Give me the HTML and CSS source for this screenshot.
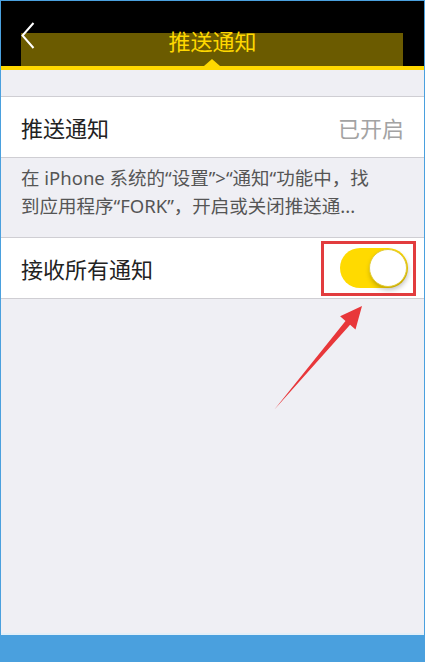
FILE: index.html
```html
<html>
    <head>
        <meta charset="utf-8">
        <link rel="stylesheet" href="styles.css">
    </head>
    <body>
        <div class="screen">
            <div class="navbar">
                <div class="title-mark"></div>
                <svg class="back" width="14" height="27" viewBox="0 0 14 27">
                    <polyline points="12.5,1 1.5,13.5 12.5,26" fill="none" stroke="#fff" stroke-width="2"/>
                </svg>
                <div class="title">推送通知</div>
                <div></div>
                <div class="notch"></div>
            </div>

            <div class="group">
                <div class="row">
                    <span class="label">推送通知</span>
                    <span class="value">已开启</span>
                </div>
            </div>

            <div class="hint">
                <div class="hint-line">在 iPhone 系统的“设置”&gt;“通知“功能中，找</div>
                <div class="hint-line">到应用程序“FORK”，开启或关闭推送通...</div>
            </div>

            <div class="group">
                <div class="row switch-row">
                    <span class="label">接收所有通知</span>
                    <div class="highlight">
                        <div class="switch on"><div class="knob"></div></div>
                    </div>
                </div>
            </div>
        </div>

        <!-- pointer arrow drawn over the page -->
        <svg class="pointer" width="425" height="662" viewBox="0 0 425 662">
            <polygon points="274,410 350.1,324.7 355.5,329.4 362,306 340.1,316.2 345.5,320.9" fill="#e8373a"/>
        </svg>
    </body>
</html>
```

FILE: styles.css
```css
body
{
    margin: 0;
    background-color: #4aa0de;
    font-family: "Noto Sans CJK SC", "Noto Sans", sans-serif;
}

.screen
{
    margin: 1px 1px 0 1px;
    height: 632px;
    background-color: #efeff4;
    border-bottom: 2px solid #e2eff8;
}

.navbar
{
    position: relative;
    height: 65px;
    padding: 0 20px;
    background-color: #000;
    border-bottom: 4px solid #ffd800;
    display: grid;
    grid-template-columns: 1fr auto 1fr;
    align-items: start;
}

.title-mark
{
    position: absolute;
    left: 20px;
    top: 32px;
    width: 382px;
    height: 33px;
    background-color: #6b5b00;
}

.back
{
    position: relative;
    margin-top: 21px;
}

.title
{
    position: relative;
    margin-top: 22px;
    line-height: 34px;
    font-size: 22px;
    color: #ffd800;
}

.notch
{
    position: absolute;
    left: 203px;
    bottom: 0;
    width: 0;
    height: 0;
    border-left: 8px solid transparent;
    border-right: 8px solid transparent;
    border-bottom: 7px solid #ffd800;
}

.group
{
    background-color: #fff;
    border-top: 1px solid #cfced3;
    border-bottom: 1px solid #cfced3;
}

.navbar + .group
{
    margin-top: 26px;
}

.row
{
    height: 60px;
    padding: 0 20px;
    display: flex;
    align-items: center;
    justify-content: space-between;
    font-size: 22px;
}

.label
{
    color: #222;
}

.value
{
    color: #a3a3a3;
}

.hint
{
    padding: 6px 20px 17px 20px;
    font-family: "Noto Sans", "Noto Sans CJK SC", sans-serif;
    font-size: 18.5px;
    line-height: 28px;
    color: #555;
}

.hint-line
{
    white-space: nowrap;
}

.switch-row
{
    padding-right: 13px;
}

.highlight
{
    width: 84px;
    height: 49px;
    border: 3px solid #e23c3e;
    display: flex;
    align-items: center;
    justify-content: flex-end;
    padding-right: 5px;
    box-sizing: content-box;
    margin-right: -5px;
}

.switch
{
    width: 68px;
    height: 40px;
    border-radius: 20px;
    background-color: #ffda00;
    display: flex;
    align-items: center;
    justify-content: flex-end;
    padding: 0 1px;
    box-sizing: border-box;
}

.knob
{
    width: 38px;
    height: 38px;
    border-radius: 50%;
    background-color: #fff;
    border: 1px solid #e2cc3a;
    box-sizing: border-box;
    box-shadow: 1px 3px 5px rgba(0, 0, 0, 0.25);
}

.pointer
{
    position: absolute;
    left: 0;
    top: 0;
    pointer-events: none;
}
```
